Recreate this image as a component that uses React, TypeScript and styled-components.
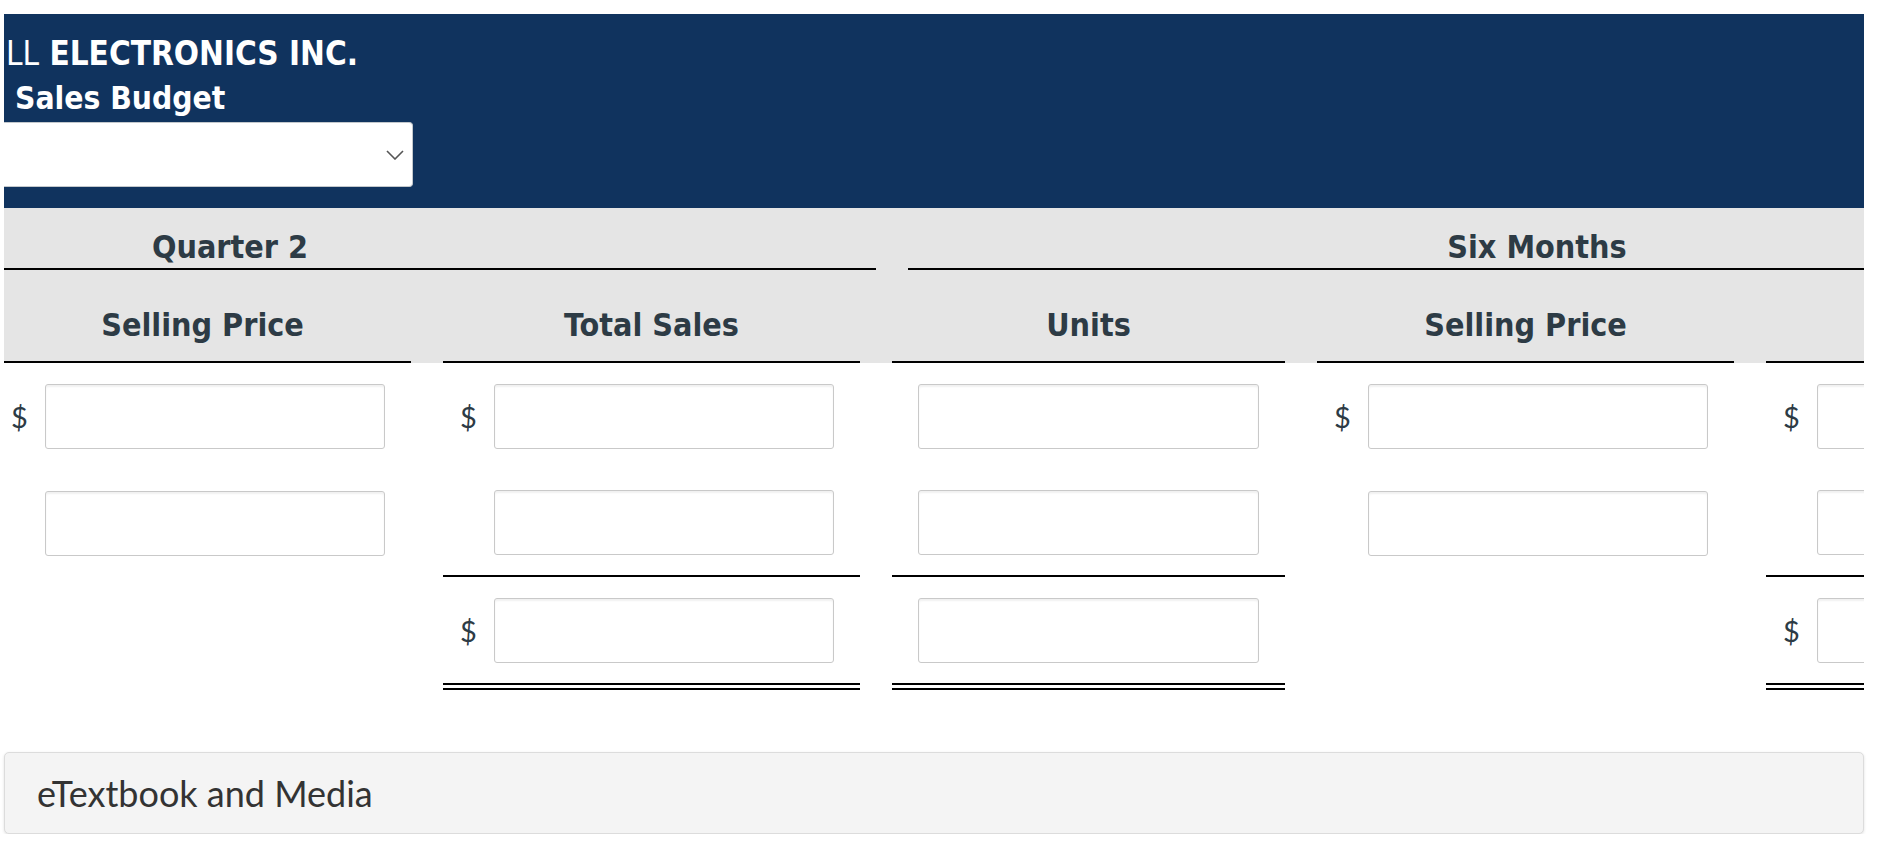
import styled, { createGlobalStyle } from "styled-components";

const NAVY = "#10335e";
const INK = "#2d3b45";
const HEAD_FONT = `"DejaVu Sans Condensed", "DejaVu Sans", sans-serif`;

const GlobalStyle = createGlobalStyle`
  body {
    margin: 0;
    background: #fff;
    font-family: Lato, "Noto Sans", sans-serif;
  }
`;

const Page = styled.div`
  margin-left: 4px;
  width: 1860px;
  padding-top: 14px;
`;

const Banner = styled.header`
  background: ${NAVY};
  height: 194px;
  box-sizing: border-box;
  padding-top: 18px;
  color: #fff;
  overflow: hidden;
`;

const TitleLine = styled.div<{ $indent: number; $size: number }>`
  font-family: ${HEAD_FONT};
  font-stretch: condensed;
  font-size: ${(p) => p.$size}px;
  font-weight: 700;
  line-height: 44px;
  padding-left: ${(p) => p.$indent}px;
  white-space: nowrap;
`;

const Light = styled.span`
  font-weight: 400;
`;

const Select = styled.div`
  width: 409px;
  height: 65px;
  margin-top: 2px;
  box-sizing: border-box;
  background: #fff;
  border: 1px solid #c3c8cc;
  border-left: none;
  border-radius: 0 4px 4px 0;
  display: flex;
  align-items: center;
  justify-content: flex-end;
  padding-right: 8px;
`;

const Clip = styled.div`
  overflow: hidden;
`;

const Band = styled.div`
  background: #e5e5e5;
`;

const Track = styled.div<{ $shift: number }>`
  display: flex;
  gap: 32px;
  margin-left: ${(p) => p.$shift}px;
`;

const GroupHead = styled.div<{ $w: number }>`
  flex: 0 0 ${(p) => p.$w}px;
  height: 58px;
  border-bottom: 2px solid #000;
  display: flex;
  align-items: flex-end;
  justify-content: center;
  padding-bottom: 2px;
  font-family: ${HEAD_FONT};
  font-stretch: condensed;
  font-size: 32px;
  font-weight: 700;
  line-height: 38px;
  color: ${INK};
  white-space: nowrap;
`;

const ColHead = styled.div<{ $w: number }>`
  flex: 0 0 ${(p) => p.$w}px;
  height: 74px;
  padding-bottom: 17px;
  border-bottom: 2px solid #000;
  display: flex;
  align-items: flex-end;
  justify-content: center;
  font-family: ${HEAD_FONT};
  font-stretch: condensed;
  font-size: 32px;
  font-weight: 700;
  line-height: 38px;
  color: ${INK};
  white-space: nowrap;
`;

type Rule = "none" | "single" | "double";

const Cell = styled.div<{ $w: number; $sign: boolean; $rule: Rule }>`
  flex: 0 0 ${(p) => p.$w}px;
  box-sizing: border-box;
  display: flex;
  align-items: center;
  padding: 21px 26px 20px ${(p) => (p.$sign ? 17 : 26)}px;
  border-bottom: ${(p) =>
    p.$rule === "single"
      ? "2px solid #000"
      : p.$rule === "double"
      ? "7px double #000"
      : "none"};
`;

const Sign = styled.span`
  flex: 0 0 34px;
  font-size: 29px;
  color: ${INK};
  line-height: 1;
`;

const Field = styled.input`
  flex: 1;
  min-width: 0;
  height: 65px;
  box-sizing: border-box;
  border: 1px solid #c9c9c9;
  border-radius: 3px;
  background: #fff;
  box-shadow: inset 0 2px 2px rgba(0, 0, 0, 0.06);
  outline: none;
`;

const Blank = styled.div`
  flex: 1;
  height: 65px;
`;

const Media = styled.div`
  margin-top: 62px;
  height: 82px;
  box-sizing: border-box;
  border: 1px solid #dcdcdc;
  border-radius: 5px;
  background: #f4f4f4;
  box-shadow: 0 1px 3px rgba(0, 0, 0, 0.12);
  display: flex;
  align-items: center;
  padding-left: 32px;
  font-size: 36px;
  color: #333;
`;

type Kind = "units" | "price" | "total";

const kinds: Kind[] = ["units", "price", "total", "units", "price", "total"];
const widths: Record<Kind, number> = { units: 393, price: 417, total: 417 };
const labels: Record<Kind, string> = {
  units: "Units",
  price: "Selling Price",
  total: "Total Sales",
};

// what each row shows per column kind: [has $, has field, rule below]
const rows: Record<Kind, [boolean, boolean, Rule]>[] = [
  { units: [false, true, "none"], price: [true, true, "none"], total: [true, true, "none"] },
  { units: [false, true, "single"], price: [false, true, "none"], total: [false, true, "single"] },
  { units: [false, true, "double"], price: [false, false, "none"], total: [true, true, "double"] },
];

function Chevron() {
  return (
    <svg width="18" height="10" viewBox="0 0 18 10">
      <polyline points="1,1 9,9 17,1" fill="none" stroke="#555" strokeWidth="1.6" />
    </svg>
  );
}

export default function App() {
  return (
    <>
      <GlobalStyle />
      <Page>
        <Banner>
          <TitleLine $indent={2} $size={33}>
            <Light>LL</Light> ELECTRONICS INC.
          </TitleLine>
          <TitleLine $indent={11} $size={31.5}>
            Sales Budget
          </TitleLine>
          <Select>
            <Chevron />
          </Select>
        </Banner>

        <Clip>
          <Band>
            <Track $shift={-420}>
              <GroupHead $w={1292}>Quarter 2</GroupHead>
              <GroupHead $w={1258}>Six Months</GroupHead>
            </Track>
            <Track $shift={-435}>
              {kinds.map((k, i) => (
                <ColHead key={i} $w={widths[k]}>
                  {labels[k]}
                </ColHead>
              ))}
            </Track>
          </Band>

          {rows.map((row, r) => (
            <Track key={r} $shift={-435}>
              {kinds.map((k, i) => {
                const [sign, field, rule] = row[k];
                const signed = k !== "units";
                return (
                  <Cell key={i} $w={widths[k]} $sign={signed} $rule={rule}>
                    {signed && <Sign>{sign ? "$" : ""}</Sign>}
                    {field ? <Field type="text" /> : <Blank />}
                  </Cell>
                );
              })}
            </Track>
          ))}
        </Clip>

        <Media>eTextbook and Media</Media>
      </Page>
    </>
  );
}
